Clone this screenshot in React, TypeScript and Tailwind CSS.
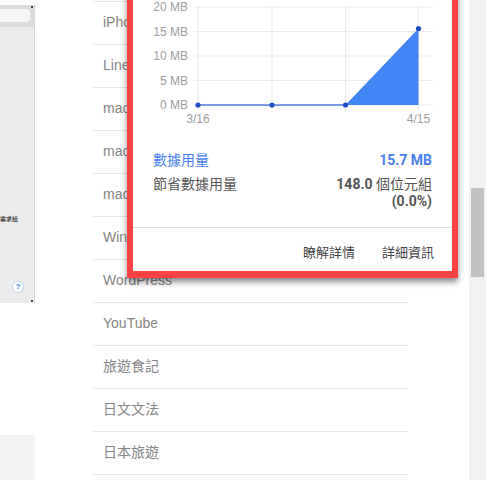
import React from "react";

const ROWS = [
  "iPhone",
  "Line",
  "macOS",
  "macOS",
  "macOS",
  "Win10",
  "WordPress",
  "YouTube",
  "旅遊食記",
  "日文文法",
  "日本旅遊",
];

const Y_TICKS = [
  { label: "20 MB", y: 7 },
  { label: "15 MB", y: 31.5 },
  { label: "10 MB", y: 56 },
  { label: "5 MB", y: 80.5 },
  { label: "0 MB", y: 105 },
];

const X_LINES = [198, 272, 345.5, 418.5];

function UsageChart() {
  // drawn in page coordinates: viewBox starts at the card's inner top-left
  return (
    <svg width="319" height="134" viewBox="133 -4 319 134" className="block">
      {Y_TICKS.map((t) => (
        <g key={t.label}>
          <line x1="194" y1={t.y} x2="433" y2={t.y} stroke="#ebebeb" strokeWidth="1" />
          <text
            x="188"
            y={t.y + 4}
            textAnchor="end"
            fontSize="12"
            fill="#9e9e9e"
            fontFamily="'Liberation Sans', Arial, sans-serif"
          >
            {t.label}
          </text>
        </g>
      ))}
      {X_LINES.map((x) => (
        <line key={x} x1={x} y1="7" x2={x} y2="110" stroke="#ebebeb" strokeWidth="1" />
      ))}
      <polygon points="345.5,105 418.5,28.5 418.5,105" fill="#4285f4" />
      <line x1="198" y1="105" x2="345.5" y2="105" stroke="#7a9ae0" strokeWidth="2" />
      {[
        [198, 105],
        [272, 105],
        [345.5, 105],
        [418.5, 28.5],
      ].map(([x, y]) => (
        <circle key={x} cx={x} cy={y} r="2.6" fill="#1f4fc4" />
      ))}
      <text x="198" y="123" textAnchor="middle" fontSize="12" fill="#9e9e9e" fontFamily="'Liberation Sans', Arial, sans-serif">
        3/16
      </text>
      <text x="418.5" y="123" textAnchor="middle" fontSize="12" fill="#9e9e9e" fontFamily="'Liberation Sans', Arial, sans-serif">
        4/15
      </text>
    </svg>
  );
}

function DataSaverCard() {
  return (
    <div className="absolute left-[127px] top-[-10px] w-[331px] border-[6px] border-b-[7px] border-[#fd4343] bg-white shadow-[0_4px_6px_rgba(0,0,0,0.45)] font-['Roboto','Noto_Sans_CJK_TC',sans-serif]">
      <UsageChart />
      <div className="px-[20px] pt-[21.5px] pb-[17px] text-[14px]">
        <div className="flex justify-between leading-[17px] text-[#4a7ff0]">
          <span>數據用量</span>
          <span className="font-bold">15.7 MB</span>
        </div>
        <div className="mt-[7px] flex justify-between leading-[17px] text-[#555]">
          <span>節省數據用量</span>
          <span className="text-right">
            <span className="font-bold">148.0</span> 個位元組
            <br />
            <span className="font-bold">(0.0%)</span>
          </span>
        </div>
      </div>
      <div className="flex justify-end gap-[27px] border-t border-[#dcdcdc] pt-[15px] pb-[8px] pr-[18px] text-[13px] leading-[20px] text-[#444]">
        <span>瞭解詳情</span>
        <span>詳細資訊</span>
      </div>
    </div>
  );
}

function SidePanel() {
  return (
    <div className="w-[35px] shrink-0">
      <div className="relative mt-[5px] h-[298px] border-r border-[#d6d6d6] bg-[#ebebeb]">
        <div className="h-[22px] bg-[#dcdcdc] pt-[4px]">
          <div className="h-[13px] w-[30px] rounded-r-[4px] bg-[#f6f6f6]" />
        </div>
        <div className="absolute right-[1px] top-[1px] h-[2px] w-[2px] bg-[#444]" />
        <div className="absolute bottom-[1px] right-[1px] h-[2px] w-[2px] bg-[#444]" />
        <div className="mt-[188px] text-[6px] leading-[8px] text-black font-['Noto_Sans_CJK_TC',sans-serif] whitespace-nowrap">
          需求給
        </div>
        <div className="mt-[58px] ml-[12px] flex h-[12px] w-[12px] items-center justify-center rounded-full border border-[#b9d3ee] bg-white text-[8px] font-bold leading-none text-[#3c82d8] font-['Liberation_Sans',sans-serif]">
          ?
        </div>
      </div>
      <div className="mt-[132px] h-[60px] rounded-tr-[3px] bg-[#f2f2f2]" />
    </div>
  );
}

export default function App() {
  return (
    <div className="relative h-[480px] w-[486px] overflow-hidden bg-white">
      <div className="flex h-full">
        <SidePanel />
        <ul className="ml-[58px] mt-[1px] w-[315px] shrink-0 border-t border-[#e6e6e6] font-['Liberation_Sans','Noto_Sans_CJK_TC',sans-serif]">
          {ROWS.map((r, i) => (
            <li
              key={i}
              className="flex h-[43px] items-center overflow-hidden whitespace-nowrap border-b border-[#e6e6e6] pb-[2px] pl-[10px] text-[14px] text-[#858585]"
            >
              {r}
            </li>
          ))}
        </ul>
        <div className="ml-auto h-full w-[17px] bg-[#f1f1f1] pt-[188px]">
          <div className="mx-auto h-[89px] w-[13px] bg-[#c1c1c1]" />
        </div>
      </div>
      <DataSaverCard />
    </div>
  );
}
